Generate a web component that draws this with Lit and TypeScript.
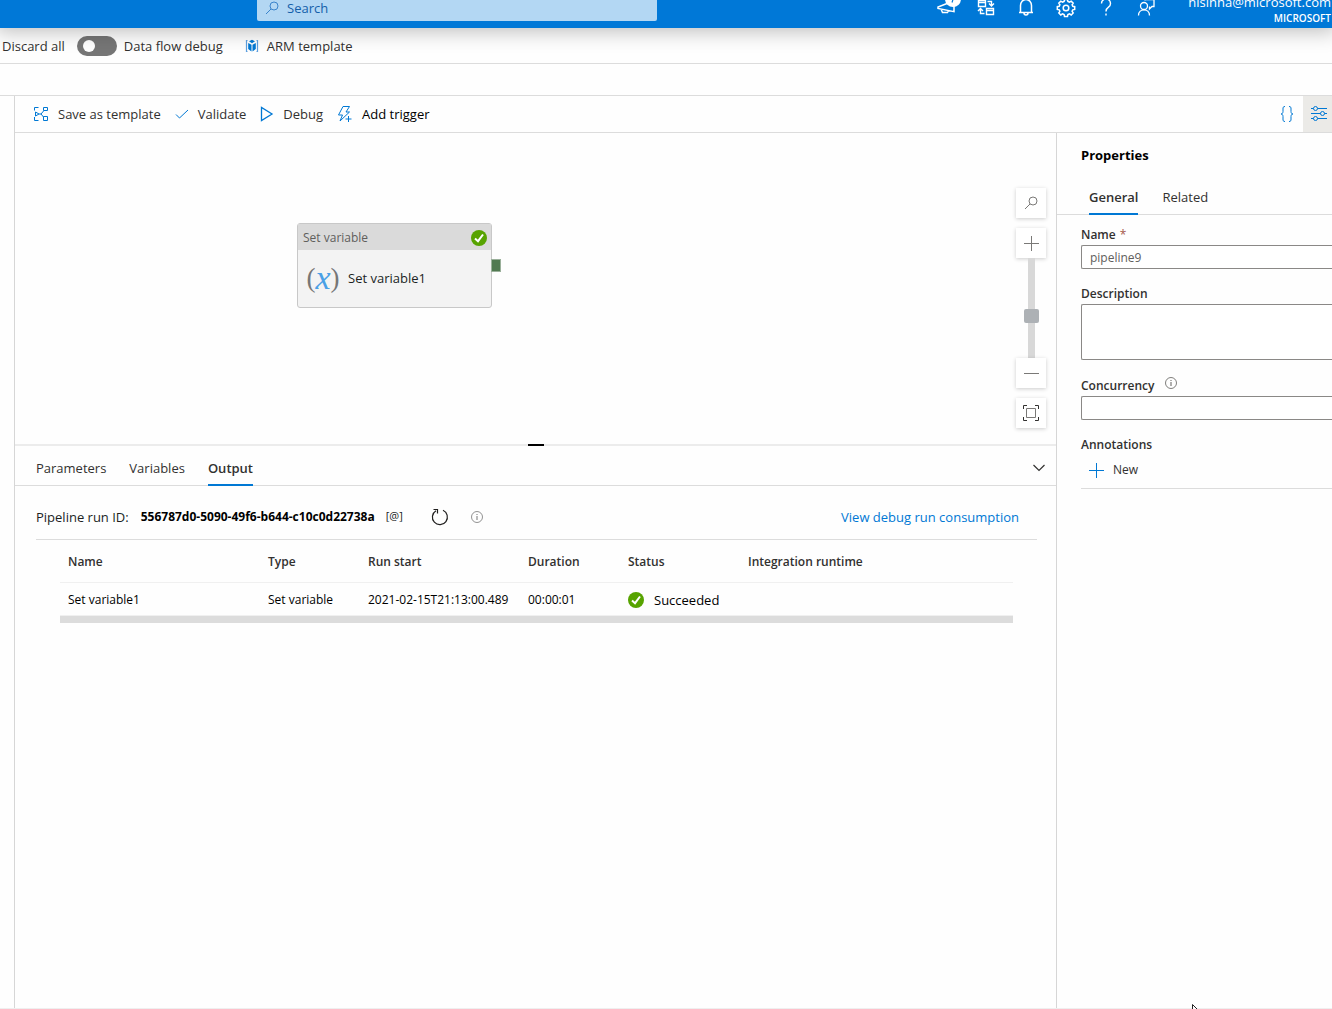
import { LitElement, html, css, svg } from "lit";
import { customElement, state } from "lit/decorators.js";

const icon = (w: number, h: number, body: unknown) =>
  html`<svg class="icon" width=${w} height=${h} viewBox="0 0 ${w} ${h}" aria-hidden="true">${body}</svg>`;

const icons = {
  search: icon(14, 14, svg`<circle cx="9" cy="5" r="4"/><path d="M6 8 1 13"/>`),
  megaphone: icon(20, 20, svg`<path d="M11 6.500 2 10v1.500l16 3.200V8M5 12l1.500 3.500h5l1-2" stroke-width="1.500"/><circle cx="17" cy="2" r="8" fill="#fff" stroke="none"/><path d="M17.500 1 16 5.500" stroke="#0078d7" stroke-width="1.200"/>`),
  directory: icon(18, 18, svg`<path d="M1.500 2.500h7v6h-7zM1.500 4.500h7M9.500 10.500h7v6h-7zM9.500 12.500h7M10.500 3.500h4v4M12 5.500l2.500 2.500L17 5.500M7.500 15.500h-4V11M1 13l2.500-2.500L6 13" stroke-width="1.400"/>`),
  bell: icon(18, 18, svg`<path d="M2 14.500h14M3.500 14.500V7.500a5.500 6 0 0 1 11 0v7M7 15a2 2 0 0 0 4 0" stroke-width="1.500"/>`),
  gear: icon(18, 18, svg`<path d="M7.500 1.500h3l.4 2 1.600.7 1.700-1.100 2 2-1.100 1.700.7 1.500 1.900.4v2.700l-1.900.4-.7 1.500 1.100 1.700-2 2-1.700-1.100-1.600.7-.4 1.900h-3l-.4-1.900-1.600-.7-1.700 1.100-2-2 1.100-1.700-.7-1.500-1.900-.4V8.700l1.900-.4.7-1.500-1.100-1.700 2-2 1.700 1.100 1.600-.7z" stroke-width="1.500"/><circle cx="9" cy="10" r="2.800" stroke-width="1.500"/>`),
  help: icon(12, 18, svg`<path d="M1.500 5.500a4.500 4.500 0 1 1 7 3.700C6.500 10.500 6 11 6 13.500M6 15.500v2" stroke-width="1.400"/>`),
  feedback: icon(18, 20, svg`<circle cx="7" cy="9" r="3.500" stroke-width="1.300"/><path d="M1.500 18.500c0-7.500 11-7.500 11 0M8 3.500V2.500h9v7h-2l-2.500 2.500V9.500" stroke-width="1.300"/>`),
  arm: icon(14, 14, svg`<path d="M2.500 1.500h-1v11h1M11.500 1.500h1v11h-1" stroke="#5ea0e0" stroke-width="1.200"/><path d="m7 .8 3 1.500-3 2-3-2zM3.200 4l3.300 1.800v6.700L3.200 10zM10.800 4 7.500 5.800v6.700l3.300-2.500z" fill="#0078d4" stroke="none"/>`),
  template: icon(16, 16, svg`<path d="M5.500 1.500h-4v3M1.500 11v3.500h4M10.500 1.500h4v3h-4zM10.500 10.500h4v4h-4zM2.500 6l3.500 2-3.500 2zM6 8h2l3-3.500M8 8l2.500 3"/>`),
  check: icon(14, 14, svg`<path d="M1 7.500 4.500 11 13 3"/>`),
  play: icon(14, 16, svg`<path d="M1.500 1.500v13L12 8z" stroke-width="1.300"/>`),
  bolt: icon(16, 18, svg`<path d="M6 1.500h6.500L9 7h3.500L3 16l2.500-6H1.500zM11.500 11v6M8.500 14h6"/>`),
  braces: icon(14, 16, svg`<path d="M5 .5C3 .5 3 1.500 3 3v2.500c0 1.500-.7 2.500-2 2.500 1.300 0 2 1 2 2.500V13c0 1.500 0 2.500 2 2.500M9 .5c2 0 2 1 2 2.500v2.500c0 1.500.7 2.500 2 2.500-1.300 0-2 1-2 2.500V13c0 1.500 0 2.500-2 2.500"/>`),
  sliders: icon(16, 16, svg`<path d="M0 2.500h2.500M6.500 2.500H16M0 7.500h9.500M13.500 7.500H16M0 12.500h2.500M6.500 12.500H16"/><circle cx="4.500" cy="2.500" r="2"/><circle cx="11.500" cy="7.500" r="2"/><circle cx="4.500" cy="12.500" r="2"/>`),
  plus: icon(15, 15, svg`<path d="M7.500 0v15M0 7.500h15"/>`),
  minus: icon(15, 15, svg`<path d="M0 7.500h15"/>`),
  fit: icon(16, 16, svg`<path d="M4 .5H.5V4M12 .5h3.500V4M4 15.500H.5V12M12 15.500h3.500V12" stroke="#323130"/><path d="M3.500 3.500h9v9h-9z"/>`),
  chevron: icon(14, 8, svg`<path d="M1.500 1 7 6.500 12.500 1" stroke-width="1.200"/>`),
  refresh: icon(18, 18, svg`<path d="M12 2.300a7.500 7.500 0 1 1-7 .4M2.500 1.500h4v4" stroke-width="1.200"/>`),
  info: icon(12, 12, svg`<circle cx="6" cy="6" r="5.500" stroke-width=".8"/><path d="M6 5v4M6 3v1"/>`),
  done: icon(16, 16, svg`<circle cx="8" cy="8" r="8" fill="#57a300" stroke="none"/><path d="M4 8.500 7 11.200l5-6.700" stroke="#fff" stroke-width="2"/>`),
};

@customElement("app-root")
export class AppRoot extends LitElement {
  @state() private zoom = 41;

  static styles = css`
    :host {
      position: relative;
      display: flex;
      flex-direction: column;
      min-height: 100vh;
      background: #fefefe;
      color: #323130;
      font: 13px/18px "Open Sans", "Noto Sans", sans-serif;
    }
    * { box-sizing: border-box; }
    button, input, textarea {
      font: inherit;
      color: inherit;
      margin: 0;
      padding: 0;
      border: 0;
      background: none;
    }
    a { color: #0078d4; text-decoration: none; }
    .icon { display: block; flex: none; fill: none; stroke: currentColor; overflow: visible; }

    .header {
      display: flex;
      align-items: flex-end;
      height: 28px;
      background: #0078d7;
      color: #fff;
      box-shadow: 0 0 20px 4px rgba(0, 0, 0, 0.25);
      overflow: hidden;
      position: relative;
      flex: none;
    }
    .search {
      display: flex;
      align-items: center;
      gap: 8px;
      width: 400px;
      height: 26px;
      margin: 0 auto 7px 257px;
      padding: 0 8px;
      border-radius: 2px;
      background: #b3d7f3;
      color: #3a84cc;
    }
    .search input { flex: 1; }
    .search input::placeholder { color: #1460aa; opacity: 1; }
    .tools { display: flex; margin-right: 22px; }
    .tools button { display: grid; place-items: center; width: 40px; height: 42px; }
    .account { text-align: right; padding: 0 1px 3px 0; }
    .mail { font-size: 13px; line-height: 18px; }
    .org { font-size: 10px; font-weight: 600; line-height: 14px; }

    .bar { display: flex; align-items: center; flex: none; }
    .bar button, .add { display: flex; align-items: center; gap: 9px; }
    .bar .icon, .add .icon { color: #0078d4; }
    .global { height: 36px; padding-left: 2px; gap: 12px; border-bottom: 1px solid #dcdcdc; }
    .global .arm { margin-left: 10px; gap: 8px; }
    .switch { display: flex; align-items: center; gap: 7px; }
    .switch input {
      appearance: none;
      width: 40px;
      height: 20px;
      padding: 4px 6px;
      border-radius: 10px;
      background: #767676;
    }
    .switch input::before {
      content: "";
      display: block;
      width: 12px;
      height: 12px;
      border-radius: 50%;
      background: #fff;
    }
    .switch input:checked { background: #0078d4; }
    .switch input:checked::before { margin-left: 16px; }

    .workspace {
      flex: 1;
      display: flex;
      flex-direction: column;
      margin-top: 31px;
      border-top: 1px solid #dcdcdc;
      border-bottom: 1px solid #efefef;
      padding-left: 14px;
    }
    .frame {
      flex: 1;
      display: flex;
      flex-direction: column;
      border-left: 1px solid #d6d6d6;
    }
    .commands { height: 37px; padding-left: 18px; gap: 14px; border-bottom: 1px solid #dcdcdc; }
    .commands .strong { color: #000; }
    .commands .code { margin-left: auto; margin-right: -5px; }
    .commands .toggle { width: 29px; height: 36px; padding-left: 8px; background: #ebeae7; }
    .columns { flex: 1; display: grid; grid-template-columns: minmax(0, 1fr) 276px; }
    .editor { display: flex; flex-direction: column; }

    .canvas { position: relative; height: 311px; overflow: hidden; }
    .node {
      position: absolute;
      left: 282px;
      top: 90px;
      width: 195px;
      height: 85px;
      border: 1px solid #c8c8c8;
      border-radius: 3px;
      background: #f3f3f3;
    }
    .node-head {
      display: flex;
      align-items: center;
      justify-content: space-between;
      height: 26px;
      padding: 2px 4px 0 5px;
      background: #dadada;
      color: #605e5c;
      font-size: 12px;
    }
    .node-body { display: flex; align-items: center; gap: 8px; height: 55px; padding-left: 8px; color: #201f1e; }
    .var {
      display: flex;
      align-items: center;
      justify-content: center;
      width: 34px;
      height: 32px;
      font: 27px/32px "Liberation Serif", serif;
      color: #767676;
    }
    .var i { color: #4aa0e6; font-size: 34px; }
    .port { position: absolute; right: -10px; top: 35px; width: 10px; height: 13px; background: #517a51; border: 1px solid #9ab09a; }

    .zoom {
      position: absolute;
      right: 10px;
      top: 55px;
      display: flex;
      flex-direction: column;
      align-items: center;
      color: #7a7977;
    }
    .zoom button {
      display: grid;
      place-items: center;
      width: 30px;
      height: 30px;
      background: #fff;
      box-shadow: 0 1px 4px rgba(0, 0, 0, 0.2);
    }
    .zoom .gap { margin-bottom: 10px; }
    .zoom input {
      appearance: none;
      writing-mode: vertical-lr;
      direction: rtl;
      width: 15px;
      height: 100px;
      background: linear-gradient(#d8d8d8, #d8d8d8) center / 7px 100% no-repeat;
    }
    .zoom input::-webkit-slider-thumb {
      appearance: none;
      width: 15px;
      height: 14px;
      border-radius: 2px;
      background: #adb1b5;
    }

    .panel { flex: 1; border-top: 2px solid #ececec; position: relative; }
    .grip { position: absolute; left: 50%; top: -2px; width: 16px; height: 2px; margin-left: -8px; background: #000; }
    .tabs { display: flex; border-bottom: 1px solid #dcdcdc; }
    .tabs button { padding-bottom: 8px; border-bottom: 2px solid transparent; margin-bottom: -1px; }
    .tabs .on { font-weight: 600; border-color: #0078d4; }
    .panel .tabs { height: 40px; padding: 13px 10px 0 21px; gap: 23px; }
    .panel .tabs .collapse { margin-left: auto; }

    .run { display: flex; align-items: center; height: 54px; margin: 0 19px 0 21px; padding: 8px 18px 0 0; border-bottom: 1px solid #dcdcdc; color: #201f1e; }
    .run strong { margin-left: 12px; font-size: 12px; font-weight: 700; color: #000; }
    .run .at { margin-left: 11px; padding-bottom: 2px; font-size: 11px; }
    .run .refresh { margin-left: 28px; }
    .run .info { margin-left: 22px; color: #767676; }
    .run a { margin-left: auto; }

    .runs { padding: 0 43px 0 45px; }
    table { width: 100%; table-layout: fixed; border-collapse: collapse; }
    th, td { padding: 2px 0 0 8px; text-align: left; white-space: nowrap; font-size: 12px; border-bottom: 1px solid #f0f0f0; }
    th { height: 42px; font-weight: 600; }
    td { height: 33px; color: #000; }
    .status { display: flex; align-items: center; gap: 10px; font-size: 13px; }
    .track { height: 7px; background: #dcdcdc; }
    .c-name { width: 200px; }
    .c-type { width: 100px; }
    .c-start { width: 160px; }
    .c-time { width: 100px; }
    .c-status { width: 120px; }

    .props { border-left: 1px solid #d6d6d6; overflow: hidden; }
    h2 { margin: 0; padding: 13px 24px 0; font-size: 13px; line-height: 18px; font-weight: 700; color: #000; }
    .props .tabs { height: 51px; padding: 24px 0 0 32px; gap: 24px; }
    .form { padding-left: 24px; display: flex; flex-direction: column; font-size: 12px; }
    .form label, .caption { font-weight: 600; display: flex; gap: 4px; margin-bottom: 1px; }
    .star { color: #a4574a; font-weight: 400; }
    .form input, .form textarea {
      height: 24px;
      padding: 0 8px;
      border: 1px solid #8a8886;
      border-right: 0;
      border-radius: 2px 0 0 2px;
      background: #fff;
      color: #605e5c;
      resize: none;
    }
    .form textarea { height: 56px; }
    .field { display: flex; flex-direction: column; margin-top: 16px; }
    .field:first-child { margin-top: 11px; }
    .form .with-info { line-height: 19px; }
    .form label .icon { margin: 1px 0 0 7px; color: #605e5c; }
    .add { gap: 9px; padding: 0 0 0 8px; height: 30px; }
    .rule { height: 1px; background: #dcdcdc; margin-top: 3px; }
    .cursor { position: absolute; right: 132px; bottom: 0; }
  `;

  render() {
    return html`
      <header class="header">
        <label class="search">${icons.search}<input type="search" placeholder="Search" aria-label="Search" /></label>
        <div class="tools">
          <button aria-label="Announcements">${icons.megaphone}</button>
          <button aria-label="Switch directory">${icons.directory}</button>
          <button aria-label="Notifications">${icons.bell}</button>
          <button aria-label="Settings">${icons.gear}</button>
          <button aria-label="Help">${icons.help}</button>
          <button aria-label="Feedback">${icons.feedback}</button>
        </div>
        <div class="account">
          <div class="mail">nisinha@microsoft.com</div>
          <div class="org">MICROSOFT</div>
        </div>
      </header>

      <div class="bar global">
        <button>Discard all</button>
        <label class="switch"><input type="checkbox" role="switch" />Data flow debug</label>
        <button class="arm">${icons.arm}ARM template</button>
      </div>

      <main class="workspace">
        <div class="frame">
          <div class="bar commands">
            <button>${icons.template}Save as template</button>
            <button>${icons.check}Validate</button>
            <button>${icons.play}Debug</button>
            <button class="strong">${icons.bolt}Add trigger</button>
            <button class="code" aria-label="Code">${icons.braces}</button>
            <button class="toggle" aria-label="Properties">${icons.sliders}</button>
          </div>
          <div class="columns">
            <section class="editor">${this.renderCanvas()}${this.renderPanel()}</section>
            ${this.renderProperties()}
          </div>
        </div>
      </main>
      <svg class="cursor" width="8" height="5" viewBox="0 0 8 5" aria-hidden="true">
        <path d="M.5 5V.5L5 5" fill="#fff" stroke="#222" />
      </svg>
    `;
  }

  private renderCanvas() {
    return html`
      <div class="canvas">
        <div class="node">
          <div class="node-head">Set variable${icons.done}</div>
          <div class="node-body"><span class="var">(<i>x</i>)</span>Set variable1</div>
          <span class="port"></span>
        </div>
        <div class="zoom">
          <button class="gap" aria-label="Find">${icons.search}</button>
          <button aria-label="Zoom in">${icons.plus}</button>
          <input type="range" aria-label="Zoom" .value=${String(this.zoom)}
            @input=${(e: Event) => (this.zoom = Number((e.target as HTMLInputElement).value))} />
          <button class="gap" aria-label="Zoom out">${icons.minus}</button>
          <button aria-label="Fit to screen">${icons.fit}</button>
        </div>
      </div>
    `;
  }

  private renderPanel() {
    return html`
      <div class="panel">
        <span class="grip"></span>
        <div class="tabs">
          <button>Parameters</button>
          <button>Variables</button>
          <button class="on">Output</button>
          <button class="collapse" aria-label="Collapse">${icons.chevron}</button>
        </div>
        <div class="run">
          Pipeline run ID: <strong>556787d0-5090-49f6-b644-c10c0d22738a</strong>
          <button class="at">[@]</button>
          <button class="refresh" aria-label="Refresh">${icons.refresh}</button>
          <button class="info" aria-label="Information">${icons.info}</button>
          <a href="#consumption">View debug run consumption</a>
        </div>
        <div class="runs">
          <table>
            <thead>
              <tr>
                <th class="c-name">Name</th>
                <th class="c-type">Type</th>
                <th class="c-start">Run start</th>
                <th class="c-time">Duration</th>
                <th class="c-status">Status</th>
                <th>Integration runtime</th>
              </tr>
            </thead>
            <tbody>
              <tr>
                <td>Set variable1</td>
                <td>Set variable</td>
                <td>2021-02-15T21:13:00.489</td>
                <td>00:00:01</td>
                <td><span class="status">${icons.done}Succeeded</span></td>
                <td></td>
              </tr>
            </tbody>
          </table>
          <div class="track"></div>
        </div>
      </div>
    `;
  }

  private renderProperties() {
    return html`
      <aside class="props">
        <h2>Properties</h2>
        <div class="tabs"><button class="on">General</button><button>Related</button></div>
        <div class="form">
          <div class="field">
            <label for="name">Name <span class="star">*</span></label>
            <input id="name" .value=${"pipeline9"} />
          </div>
          <div class="field">
            <label for="description">Description</label>
            <textarea id="description"></textarea>
          </div>
          <div class="field">
            <label class="with-info" for="concurrency">Concurrency ${icons.info}</label>
            <input id="concurrency" />
          </div>
          <div class="field">
            <div class="caption">Annotations</div>
            <button class="add">${icons.plus}New</button>
            <div class="rule"></div>
          </div>
        </div>
      </aside>
    `;
  }
}
